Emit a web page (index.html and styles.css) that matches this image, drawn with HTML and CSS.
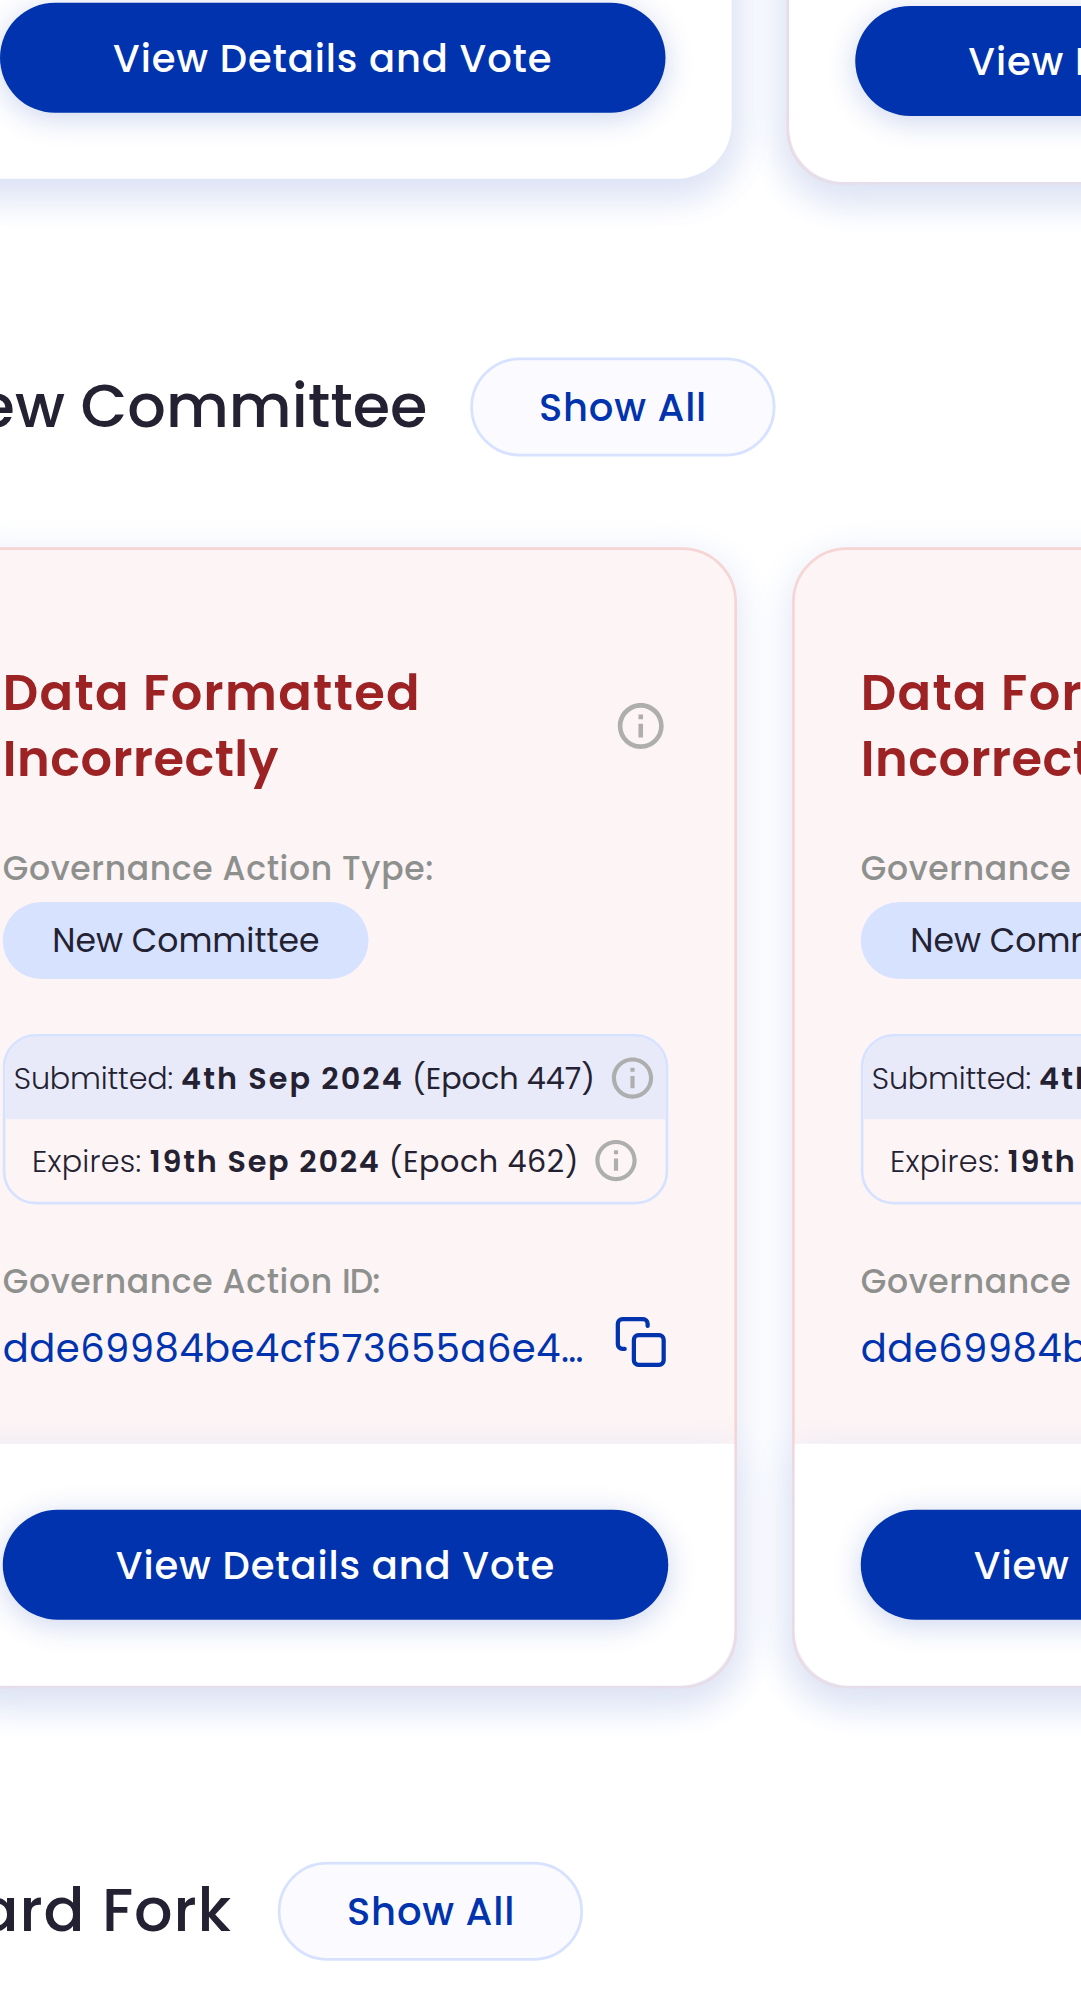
FILE: index.html
```html
<!DOCTYPE html>
<html lang="en">
<head>
<meta charset="utf-8">
<title>Governance Actions</title>
<link rel="stylesheet" href="styles.css">
</head>
<body>
<svg class="sprite" aria-hidden="true">
  <symbol id="info" viewBox="0 0 24 24">
    <path fill="currentColor" d="M11 7h2v2h-2zm0 4h2v6h-2zm1-9C6.48 2 2 6.48 2 12s4.48 10 10 10 10-4.48 10-10S17.52 2 12 2m0 18c-4.41 0-8-3.59-8-8s3.59-8 8-8 8 3.59 8 8-3.59 8-8 8"/>
  </symbol>
  <symbol id="copy" viewBox="0 0 24 24">
    <g fill="none" stroke="currentColor" stroke-width="1.85" stroke-linecap="round" stroke-linejoin="round">
      <rect x="9" y="9" width="13" height="13" rx="2"/>
      <path d="M5 15H4a2 2 0 0 1-2-2V4a2 2 0 0 1 2-2h9a2 2 0 0 1 2 2v1"/>
    </g>
  </symbol>
</svg>
<main class="page">
  <section class="carousel carousel-first">
    <article class="card">
      <div class="card-rest"></div>
      <footer class="card-footer"><button class="btn-primary">View Details and Vote</button></footer>
    </article>
    <article class="card card-error card-lowered">
      <div class="card-rest"></div>
      <footer class="card-footer"><button class="btn-primary">View Details and Vote</button></footer>
    </article>
  </section>

  <section class="group">
    <header class="group-header">
      <h2 class="group-title group-title-lowered">New Committee</h2>
      <button class="btn-outline btn-outline-tight">Show All</button>
    </header>
    <div class="carousel">
      <article class="card card-error">
        <div class="card-body">
          <div class="card-title">
            <h3 class="title-text">Data Formatted <span class="title-second">Incorrectly</span></h3>
            <svg class="icon-info"><use href="#info"/></svg>
          </div>
          <p class="label">Governance Action Type:</p>
          <span class="pill">New Committee</span>
          <div class="dates">
            <div class="date-row date-submitted">
              <p class="date-text"><span class="light">Submitted: </span><b class="strong">4th Sep 2024</b> (Epoch 447)</p>
              <svg class="icon-small"><use href="#info"/></svg>
            </div>
            <div class="date-row date-expires">
              <p class="date-text"><span class="light">Expires: </span><b class="strong">19th Sep 2024</b> <span class="epoch">(Epoch 462)</span></p>
              <svg class="icon-small"><use href="#info"/></svg>
            </div>
          </div>
          <p class="label">Governance Action <span class="label-id">ID:</span></p>
          <div class="id-row">
            <span class="id-text">dde69984be4cf573655a6e4…</span>
            <svg class="icon-copy"><use href="#copy"/></svg>
          </div>
        </div>
        <footer class="card-footer"><button class="btn-primary">View Details and Vote</button></footer>
      </article>
      <article class="card card-error">
        <div class="card-body">
          <div class="card-title">
            <h3 class="title-text">Data Formatted <span class="title-second">Incorrectly</span></h3>
            <svg class="icon-info"><use href="#info"/></svg>
          </div>
          <p class="label">Governance Action Type:</p>
          <span class="pill">New Committee</span>
          <div class="dates">
            <div class="date-row date-submitted">
              <p class="date-text"><span class="light">Submitted: </span><b class="strong">4th Sep 2024</b> (Epoch 447)</p>
              <svg class="icon-small"><use href="#info"/></svg>
            </div>
            <div class="date-row date-expires">
              <p class="date-text"><span class="light">Expires: </span><b class="strong">19th Sep 2024</b> <span class="epoch">(Epoch 462)</span></p>
              <svg class="icon-small"><use href="#info"/></svg>
            </div>
          </div>
          <p class="label">Governance Action <span class="label-id">ID:</span></p>
          <div class="id-row">
            <span class="id-text">dde69984be4cf573655a6e4…</span>
            <svg class="icon-copy"><use href="#copy"/></svg>
          </div>
        </div>
        <footer class="card-footer"><button class="btn-primary">View Details and Vote</button></footer>
      </article>
    </div>
  </section>

  <section class="group">
    <header class="group-header">
      <h2 class="group-title group-title-spaced">Hard Fork</h2>
      <button class="btn-outline">Show All</button>
    </header>
  </section>
</main>
</body>
</html>
```
FILE: styles.css
```css
* { box-sizing: border-box; }

html, body {
  margin: 0;
  height: 1999px;
  overflow: hidden;
  background: #fff;
}

body { font-family: "Poppins", "Inter", sans-serif; color: #242232; }

h2, h3, p { margin: 0; }

button { font: inherit; border: 0; padding: 0; margin: 0; display: block; }

.sprite { display: none; }

/* Mobile layout in CSS pixels, enlarged 2.75 times */
.page {
  width: 393px;
  height: 727px;
  padding-top: 0.15px;
  transform: scale(2.75);
  transform-origin: 0 0;
  display: flow-root;
}

.carousel {
  display: flex;
  align-items: flex-start;
  gap: 20px;
  width: max-content;
  margin-left: -24px;
}

.carousel-first { margin-top: -73px; }

.card {
  width: 290px;
  border-radius: 20px;
  background: #fff;
  box-shadow: 0 4px 15px #dde3f5;
}

.card-error {
  width: 292px;
  border: 1px solid #f6d5d5;
  background: #fdf4f5;
}

.card-lowered { transform: translateY(0.2px); }

.card-rest { height: 50px; }

.card-body { height: 325px; padding: 40px 24px 0; }

.card-footer {
  padding: 24px;
  background: #fff;
  border-radius: 0 0 20px 20px;
  box-shadow: 0 4px 15px #dde3f5;
}

.btn-primary {
  width: 100%;
  height: 40px;
  border-radius: 20px;
  background: #0033ad;
  color: #fff;
  font-size: 14px;
  font-weight: 500;
  line-height: 24px;
  letter-spacing: 0.31px;
  box-shadow: 0 2px 11px rgba(0, 51, 173, 0.2);
}

.group { padding-top: 63px; }

.group-header {
  display: flex;
  align-items: center;
  gap: 16px;
  height: 36px;
  margin: 0 0 33px -24px;
}

.group-title {
  padding-top: 0.5px;
  font-size: 22px;
  font-weight: 500;
  line-height: 28px;
  white-space: nowrap;
}

.group-title-lowered { transform: translateY(0.4px); }
.group-title-spaced { padding-right: 0.9px; letter-spacing: 0.31px; }

.btn-outline {
  height: 36px;
  padding: 0 24px;
  border: 1px solid #d6e2ff;
  border-radius: 18px;
  background: #fbfbff;
  color: #0033ad;
  font-size: 14px;
  font-weight: 500;
  line-height: 24px;
  letter-spacing: 0.29px;
  white-space: nowrap;
}

.btn-outline-tight { padding: 0 23.6px; }

.card-title { display: flex; align-items: center; justify-content: space-between; }

.title-text {
  width: 200px;
  color: #9c2224;
  font-size: 18px;
  font-weight: 600;
  line-height: 24px;
  letter-spacing: 0.49px;
}

.title-second { letter-spacing: 0.17px; }

.icon-info { width: 20px; height: 20px; color: #adaead; flex: none; }
.icon-small { width: 18px; height: 18px; color: #adaead; flex: none; }
.icon-copy { width: 20px; height: 20px; color: #0033ad; flex: none; }

.label {
  margin-top: 20px;
  color: #8e908e;
  font-size: 12px;
  font-weight: 500;
  line-height: 16px;
  letter-spacing: 0.24px;
}

.label-id { letter-spacing: -0.35px; }

.pill {
  display: block;
  width: max-content;
  margin-top: 4px;
  padding: 6px 18px;
  border-radius: 14px;
  background: #d6e2ff;
  font-size: 12px;
  line-height: 16px;
}

.dates {
  margin-top: 20px;
  border: 1px solid #d6e2ff;
  border-radius: 12px;
  overflow: hidden;
}

.date-row {
  display: flex;
  align-items: center;
  justify-content: center;
  gap: 4.6px;
  height: 30px;
}

.date-submitted { background: #e8eaf9; }
.date-expires { padding-left: 0.8px; }

.date-text { font-size: 11px; line-height: 16px; white-space: nowrap; }
.light { font-weight: 300; }
.strong { font-weight: 600; }

.date-submitted .light { letter-spacing: -0.07px; }
.date-submitted .strong { letter-spacing: 0.75px; }
.date-expires .light { letter-spacing: 0.09px; }
.date-expires .strong { letter-spacing: 0.64px; }
.epoch { letter-spacing: 0.2px; }

.id-row {
  display: flex;
  align-items: flex-start;
  justify-content: space-between;
  margin-top: 4px;
}

.id-text {
  color: #0033ad;
  font-size: 14px;
  line-height: 24px;
  letter-spacing: 0.18px;
  white-space: nowrap;
  transform: translateY(0.35px);
}
```
